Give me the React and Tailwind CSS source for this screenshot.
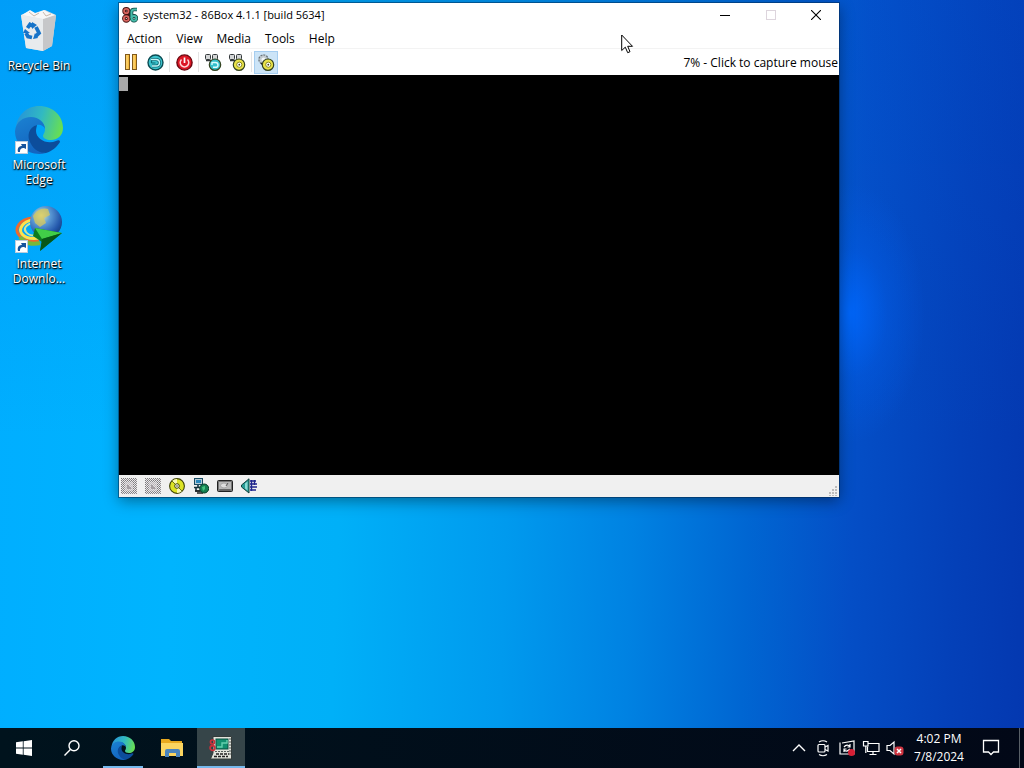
import clsx from "clsx";

function BinIcon() {
  return (
    <svg width="48" height="48" viewBox="0 0 48 48">
      <path d="M6 8 L15 4 L22 7 L30 3 L41 8 L37 39 L28 44 L11 41 Z" fill="#d9dde1" />
      <path d="M6 8 L28 12 L28 44 L11 41 Z" fill="#e8ebed" />
      <path d="M28 12 L41 8 L37 39 L28 44 Z" fill="#c6c7c9" />
      <path d="M7 8 L15 3 L20 6 L29 3 L34 6 L40 8 L28 12 Z" fill="#f7f7f7" />
      <path d="M14 5 L19 9 L24 6 M28 5 L31 9 L36 7" stroke="#c9b8ac" strokeWidth="1" fill="none" />
      <g fill="none" stroke="#1673c9" strokeWidth="3.8">
        <path d="M12.5 21 L15 17.5 L18 19" />
        <path d="M21 20 L24 26 L21 29" />
        <path d="M17 30.5 L13 29.5 L11 26" />
      </g>
      <path d="M17 15 L22 18 L17 22 Z M20 26 L18 32 L23 31 Z M8 26 L10 22 L15 26 Z" fill="#1673c9" />
    </svg>
  );
}

function EdgeIcon({ size = 48, id }) {
  return (
    <svg width={size} height={size} viewBox="0 0 48 48">
      <defs>
        <linearGradient id={`${id}-top`} x1="0" y1="0.4" x2="1" y2="0.6">
          <stop offset="0" stopColor="#2794d8" />
          <stop offset="0.5" stopColor="#31b9c2" />
          <stop offset="1" stopColor="#6ae04e" />
        </linearGradient>
        <linearGradient id={`${id}-mid`} x1="0" y1="0" x2="0.4" y2="1">
          <stop offset="0" stopColor="#1b82d2" />
          <stop offset="1" stopColor="#1365c0" />
        </linearGradient>
      </defs>
      <path d="M1 22 C2 9 12 0 24 0 C38 0 48 10 48 22 C48 30 42 34 36 34 C31 34 28 32 28 30 C28 28 30 27 30 23 C30 17 24 12 16 12 C9 12 4 16 1 22 Z" fill={`url(#${id}-top)`} />
      <path d="M0 25 C1 16 8 11 16 11 C24 11 30 17 30 23 C29 20 25 18 22 19 C15 22 13 29 17 36 C20 42 26 46 31 47 C16 51 0 41 0 25 Z" fill={`url(#${id}-mid)`} />
      <path d="M22 19 C14 21 11 30 16 38 C19 44 25 47 31 47 C37 45 42 41 45 36 C45 34 43 34 41 35 C32 39 21 33 21 25 C21 22 22 20 22 19 Z" fill="#0c4d9b" />
    </svg>
  );
}

function DownloaderIcon() {
  return (
    <svg width="48" height="48" viewBox="0 0 48 48">
      <defs>
        <radialGradient id="globe" cx="0.35" cy="0.3" r="0.8">
          <stop offset="0" stopColor="#e6efb0" />
          <stop offset="0.35" stopColor="#5c9bd6" />
          <stop offset="0.75" stopColor="#2458ac" />
          <stop offset="1" stopColor="#123a78" />
        </radialGradient>
      </defs>
      <path d="M18 13 C4 14 -1 24 4 30 C8 36 16 37 24 36" fill="none" stroke="#ee6a2c" strokeWidth="3" />
      <path d="M18 15 C8 16 3 24 7 29 C11 34 18 34 25 33" fill="none" stroke="#ffe24a" strokeWidth="3" />
      <path d="M5 32 C9 38 17 40 25 38" fill="none" stroke="#79b83a" strokeWidth="4" />
      <path d="M18 18 C11 19 8 24 11 27 C14 31 20 31 25 30" fill="none" stroke="#c9e7a0" strokeWidth="2" />
      <circle cx="31" cy="17" r="16" fill="url(#globe)" />
      <path d="M18 11 C21 5 28 2 33 4 L35 10 L29 13 L31 18 L25 22 L20 18 Z" fill="#d9c85a" opacity="0.75" />
      <path d="M20 23 L47 28 L25 46 L27 37 L18 31 Z" fill="#0c7a20" />
      <path d="M20 23 L47 28 L27 34 Z" fill="#41ce48" />
      <path d="M27 34 L47 28 L25 46 Z" fill="#075718" />
    </svg>
  );
}

function ShortcutArrow() {
  return (
    <svg className="absolute bottom-0 left-0" width="13" height="13" viewBox="0 0 13 13">
      <rect x="0.5" y="0.5" width="12" height="12" fill="#fff" stroke="#bcd" />
      <path d="M3 11 C2 7 4 5 7 5 L6 3 L11 3 L11 8 L9 7 C6 7 5 8 5 11 Z" fill="#17549c" />
    </svg>
  );
}

function BoxLogo() {
  return (
    <svg width="16" height="16" viewBox="0 0 16 16" fill="none">
      <g stroke="#42100f" strokeWidth="3.6">
        <circle cx="4.3" cy="4" r="2.2" />
        <circle cx="4.3" cy="11.5" r="2.4" />
        <path d="M4 7.7 H8" />
      </g>
      <g stroke="#d8655f" strokeWidth="1.8">
        <circle cx="4.3" cy="4" r="2.2" />
        <circle cx="4.3" cy="11.5" r="2.4" />
      </g>
      <g stroke="#0d4540" strokeWidth="3.6">
        <path d="M15 2.5 H12 Q9.5 2.5 9.5 5 V11" />
        <circle cx="12" cy="11.3" r="2.4" />
      </g>
      <g stroke="#45bba9" strokeWidth="2">
        <path d="M15 2.5 H12 Q9.5 2.5 9.5 5 V11" />
        <circle cx="12" cy="11.3" r="2.4" />
      </g>
    </svg>
  );
}

function PauseIcon() {
  return (
    <svg width="16" height="16" viewBox="0 0 16 16" fill="#f5b93c" stroke="#80591a">
      <rect x="2.5" y="0.5" width="4" height="15" />
      <rect x="9.5" y="0.5" width="4" height="15" />
      <path d="M4 1 V15 M11 1 V15" stroke="#ffe08a" />
    </svg>
  );
}

function ResetIcon() {
  return (
    <svg width="17" height="17" viewBox="0 0 17 17" fill="none">
      <circle cx="8.5" cy="8.5" r="7.5" fill="#3cc3cd" stroke="#0b4b52" strokeWidth="1.4" />
      <path d="M4 5.5 H9 Q12.5 5.5 12.5 8.7 T9 12 H5" stroke="#0b6a74" strokeWidth="3" />
      <path d="M4 5.5 H9 Q12.5 5.5 12.5 8.7 T9 12 H5" stroke="#c4f6f8" strokeWidth="1.4" />
      <path d="M4.5 9 H8.5 M4.5 9 V6.5" stroke="#0b6a74" strokeWidth="1.2" />
    </svg>
  );
}

function PowerIcon() {
  return (
    <svg width="17" height="17" viewBox="0 0 17 17" fill="none">
      <circle cx="8.5" cy="8.5" r="7.6" fill="#dc1624" stroke="#6c0710" strokeWidth="1.4" />
      <path d="M5.5 5.5 A4.3 4.3 0 1 0 11.5 5.5" stroke="#ffd5d5" strokeWidth="1.5" />
      <path d="M8.5 3.5 V9" stroke="#fff" strokeWidth="1.7" />
    </svg>
  );
}

// Small key caps over a round badge, shared by the Ctrl+Alt buttons and Settings
function BadgeIcon({ color, back = "keys", mark = "ring" }) {
  return (
    <svg width="18" height="17" viewBox="0 0 18 17" fill="none">
      {back === "keys" ? (
        <g fill="#d4d6d7" stroke="#33383b">
          <rect x="1.5" y="0.5" width="5" height="5" rx="1" />
          <rect x="8.5" y="0.5" width="5" height="5" rx="1" />
          <path d="M2 6.5 H7" strokeWidth="1.5" />
        </g>
      ) : (
        <>
          <circle cx="6.5" cy="5.5" r="4.6" fill="#c3cbd0" stroke="#6b757b" strokeWidth="1.3" strokeDasharray="2 1" />
          <circle cx="6.5" cy="5.5" r="2" fill="#f2f6f8" />
          <path d="M4 9 L7 12" stroke="#222" strokeWidth="1.5" />
        </>
      )}
      <circle cx="11" cy="10.7" r="5.7" fill={color} stroke="#33421f" strokeWidth="1.2" />
      {mark === "ring" ? (
        <>
          <circle cx="11.3" cy="10.7" r="2.6" fill="#fff" stroke="#8c8a17" />
          <circle cx="11.3" cy="10.7" r="0.9" fill="#3d3d10" />
        </>
      ) : (
        <path d="M8 8 V11 M8 8.5 H11.5 Q14 8.5 14 11 T11 13.3 H9" stroke="#dcfdff" strokeWidth="1.4" />
      )}
    </svg>
  );
}

function FloppyIcon() {
  return (
    <svg width="16" height="16" viewBox="0 0 16 16" shapeRendering="crispEdges">
      <defs>
        <pattern id="dither" width="2" height="2" patternUnits="userSpaceOnUse">
          <rect width="1" height="1" fill="#7c7c7c" />
          <rect x="1" y="1" width="1" height="1" fill="#8f8f8f" />
        </pattern>
      </defs>
      <rect width="16" height="16" fill="#ece8ec" />
      <rect width="16" height="16" fill="url(#dither)" />
      <rect x="4" y="4" width="8" height="9" fill="#dfdade" opacity="0.6" />
      <path d="M6 7 H8 V9 H10 V11 H6 Z" fill="#a39da1" />
    </svg>
  );
}

function DiscIcon() {
  return (
    <svg width="16" height="16" viewBox="0 0 16 16">
      <circle cx="8" cy="8" r="7.4" fill="#dce326" stroke="#3c4106" strokeWidth="1.1" />
      <path d="M8 8 L3 3 A7 7 0 0 1 8 1 Z M8 8 L13 13 A7 7 0 0 1 8 15 Z" fill="#fafcb2" />
      <path d="M3 3 L13 13" stroke="#6d7312" />
      <circle cx="8" cy="8" r="2.3" fill="#fff" stroke="#3c4106" />
      <circle cx="8" cy="8" r="0.8" fill="#3c4106" />
    </svg>
  );
}

function NetworkIcon() {
  return (
    <svg width="16" height="16" viewBox="0 0 16 16">
      <rect x="1.5" y="0.5" width="8" height="6" fill="#b6cbd5" stroke="#184b62" />
      <rect x="3" y="2" width="5" height="3" fill="#2a87bc" />
      <path d="M5 7 V9 M1 9.5 H10 M3 10 V13 H7" stroke="#14313c" strokeWidth="1.6" fill="none" />
      <path d="M2 13 H9 M4 15 H10" stroke="#222" strokeWidth="1.4" />
      <circle cx="11.2" cy="10.5" r="4.5" fill="#138052" stroke="#083c26" />
      <path d="M9 9 L12 8 L12 11 L10 13 Z" fill="#44c180" />
    </svg>
  );
}

function DiskIcon() {
  return (
    <svg width="16" height="16" viewBox="0 0 16 16">
      <rect x="0.5" y="2.5" width="15" height="11" rx="1" fill="#777" stroke="#222" />
      <rect x="2" y="4" width="12" height="7" fill="#b8b8b8" />
      <ellipse cx="7" cy="7.5" rx="3.5" ry="2.5" fill="#dedede" stroke="#a5a5a5" />
      <path d="M11 5 L9 8 M3 12 H13" stroke="#555" />
    </svg>
  );
}

function SoundIcon() {
  return (
    <svg width="16" height="16" viewBox="0 0 16 16">
      <path d="M0.5 7 L3 5 L8 0.8 V15 L3 11 L0.5 9 Z" fill="#279b94" stroke="#11403e" />
      <path d="M4 5.5 L6.5 3.5 V12.5 L4 10.5 Z" fill="#8adbd3" />
      <path d="M10.5 2 V13 M9 3 H15 M9 6 H16 M9 9 H16 M9 12 H15 M13.5 2 V7" stroke="#1f258d" strokeWidth="1.4" />
    </svg>
  );
}

function FolderIcon() {
  return (
    <svg width="24" height="24" viewBox="0 0 24 24">
      <path d="M1 3 H9 L11 5 H22 V20 H1 Z" fill="#e8a91f" />
      <path d="M1 7 H23 V20 H1 Z" fill="#fbd560" />
      <path d="M5 21 V15 Q5 13 7 13 H18 Q20 13 20 15 V21 H16 V17 H9 V21 Z" fill="#4a84bd" />
    </svg>
  );
}

function MachineIcon() {
  return (
    <svg width="24" height="24" viewBox="0 0 24 24">
      <path d="M4 0.5 H22.5 V23 H1.5 L4 17 Z" fill="#e2e3dc" stroke="#343c3b" />
      <rect x="7" y="3" width="12" height="10" fill="#129070" stroke="#0d4f41" />
      <path d="M8 11 H13 V7 H18 V4" fill="none" stroke="#65d0ae" strokeWidth="1.4" />
      <path d="M21 2 V20 M6 15.5 H20" stroke="#555e5b" strokeDasharray="2 1" />
      <path d="M7 18 H20 M5 20.5 H19" stroke="#222" strokeDasharray="3 1" strokeWidth="1.5" />
      <circle cx="3.5" cy="6" r="2" fill="none" stroke="#c9313b" strokeWidth="1.7" />
      <circle cx="3.5" cy="12" r="2.4" fill="none" stroke="#c9313b" strokeWidth="1.7" />
    </svg>
  );
}

function DesktopIcon({ label, shortcut, children }) {
  return (
    <button className="flex h-[99px] w-[76px] flex-col items-center gap-[3px]">
      <span className="relative">
        {children}
        {shortcut && <ShortcutArrow />}
      </span>
      <span className="text-[12px] leading-[15px] text-white [text-shadow:0_1px_2px_#000,1px_1px_1px_#000]">
        {label.map((line) => (
          <span key={line} className="block whitespace-nowrap">{line}</span>
        ))}
      </span>
    </button>
  );
}

function ToolButton({ label, active, children }) {
  return (
    <button
      aria-label={label}
      className={clsx(
        "flex h-[23px] w-6 items-center justify-center border",
        active ? "border-[#a5cdf0] bg-[#cce4f7]" : "border-transparent"
      )}
    >
      {children}
    </button>
  );
}

function Separator() {
  return <div className="mx-[2px] h-5 w-px bg-[#e4e4e4]" />;
}

function BoxWindow() {
  return (
    <section className="absolute top-[3px] left-[119px] flex w-[720px] flex-col bg-white text-[12px] text-black shadow-[0_0_0_1px_rgba(0,40,80,0.5),0_4px_14px_rgba(0,0,0,0.4)]">
      <header className="flex h-6 items-center pl-[3px]">
        <BoxLogo />
        <h1 className="flex-1 pl-[5px] text-[11px]">system32 - 86Box 4.1.1 [build 5634]</h1>
        <button aria-label="Minimize" className="flex h-6 w-[46px] items-center justify-center">
          <svg width="10" height="10" viewBox="0 0 10 10"><path d="M0 5.5 H10" stroke="#000" /></svg>
        </button>
        <button aria-label="Maximize" disabled className="flex h-6 w-[45px] items-center justify-center">
          <svg width="10" height="10" viewBox="0 0 10 10"><rect x="0.5" y="0.5" width="9" height="9" fill="none" stroke="#ddd5dd" /></svg>
        </button>
        <button aria-label="Close" className="flex h-6 w-[46px] items-center justify-center">
          <svg width="10" height="10" viewBox="0 0 10 10"><path d="M0 0 L10 10 M10 0 L0 10" stroke="#000" strokeWidth="1.1" /></svg>
        </button>
      </header>

      <nav className="flex h-[22px] items-end border-b border-[#f3f3f3]">
        {["Action", "View", "Media", "Tools", "Help"].map((item) => (
          <button key={item} className="px-[7px] first:pl-2">{item}</button>
        ))}
      </nav>

      <div className="flex h-[26px] items-center">
        <ToolButton label="Pause"><PauseIcon /></ToolButton>
        <ToolButton label="Hard reset"><ResetIcon /></ToolButton>
        <Separator />
        <ToolButton label="ACPI shutdown"><PowerIcon /></ToolButton>
        <Separator />
        <ToolButton label="Ctrl+Alt+Del"><BadgeIcon color="#35bfca" mark="arrow" /></ToolButton>
        <ToolButton label="Ctrl+Alt+Esc"><BadgeIcon color="#eae34a" /></ToolButton>
        <Separator />
        <ToolButton label="Settings" active><BadgeIcon color="#eae34a" back="gear" /></ToolButton>
        <p className="flex-1 pt-[2px] pr-px text-right">7% - Click to capture mouse</p>
      </div>

      <div className="h-[400px] bg-black pt-[2px]">
        <div className="h-[14px] w-[9px] bg-[#a8a8a8]" />
      </div>

      <footer className="flex h-[22px] items-center gap-2 bg-[#f0f0f0] pl-[2px]">
        <FloppyIcon />
        <FloppyIcon />
        <DiscIcon />
        <NetworkIcon />
        <DiskIcon />
        <SoundIcon />
        <svg className="ml-auto self-end" width="12" height="12" viewBox="0 0 12 12" fill="#bcbcbc">
          <path d="M8 1h2v2h-2z M5 4h2v2h-2z M8 4h2v2h-2z M2 7h2v2h-2z M5 7h2v2h-2z M8 7h2v2h-2z M2 10h2v1h-2z M5 10h2v1h-2z M8 10h2v1h-2z" />
        </svg>
      </footer>
    </section>
  );
}

function TaskButton({ label, running, active, children }) {
  return (
    <button
      aria-label={label}
      className={clsx("flex h-10 w-12 flex-col items-center", active && "bg-[#364549]")}
    >
      <span className="flex h-10 items-center">{children}</span>
      {running && <span className={clsx("-mt-[2px] h-[2px] bg-[#76b9ed]", active ? "w-12" : "w-10")} />}
    </button>
  );
}

function TrayButton({ label, children }) {
  return (
    <button aria-label={label} className="flex h-10 w-6 items-center justify-center">
      <svg width="18" height="18" viewBox="0 0 18 18" fill="none" stroke="#fff" strokeWidth="1.2">
        {children}
      </svg>
    </button>
  );
}

function Taskbar() {
  return (
    <footer className="flex h-10 items-center bg-linear-to-r from-[#00131d] to-[#020817] text-white">
      <div className="flex">
        <TaskButton label="Start">
          <svg width="16" height="16" viewBox="0 0 16 16" fill="#fff">
            <path d="M0 2.3 L6.8 1.3 V7.6 H0 Z M7.6 1.2 L16 0 V7.6 H7.6 Z M0 8.4 H6.8 V14.7 L0 13.7 Z M7.6 8.4 H16 V16 L7.6 14.8 Z" />
          </svg>
        </TaskButton>
        <TaskButton label="Search">
          <svg width="16" height="16" viewBox="0 0 16 16" fill="none" stroke="#fff" strokeWidth="1.4">
            <circle cx="10" cy="5.8" r="5" />
            <path d="M6.4 9.4 L0.5 15.5" />
          </svg>
        </TaskButton>
        <div className="flex gap-px pl-[3px]">
          <TaskButton label="Microsoft Edge" running><EdgeIcon size={24} id="edge-task" /></TaskButton>
          <TaskButton label="File Explorer"><FolderIcon /></TaskButton>
          <TaskButton label="86Box" running active><MachineIcon /></TaskButton>
        </div>
      </div>

      <div className="ml-auto flex items-center">
        <TrayButton label="Show hidden icons"><path d="M3 12 L9 6 L15 12" strokeWidth="1.4" /></TrayButton>
        <TrayButton label="Meet Now">
          <rect x="4" y="5.5" width="7" height="7.5" rx="1" />
          <path d="M11 8 L14 6.5 V12 L11 10.5 M5 3 Q9 0.5 13 3 M5 15.5 Q9 18 13 15.5" />
        </TrayButton>
        <TrayButton label="Updates">
          <path d="M2 5 V15 H16 V2 L4 4 M2 3.5 V6" />
          <path d="M6 8 Q9 4.5 12 7.5 M12 5 V8 H9.5 M12 10 Q9 13.5 6 11 M6 13 V10 H8.5" />
          <circle cx="13.5" cy="13.5" r="3.5" fill="#d51f35" stroke="none" />
        </TrayButton>
        <TrayButton label="Network">
          <path d="M6 4.5 H17 V12.5 H5.5 V7.5 M11 12.5 V15.5 M7.5 15.5 H14.5" />
          <path d="M1.5 2.5 H6 V7 H1.5 Z M3.8 7 V14" />
        </TrayButton>
        <TrayButton label="Volume muted">
          <path d="M1 6.5 H4 L8 3 V15 L4 11.5 H1 Z" />
          <rect x="8.5" y="7.5" width="9" height="9" rx="3" fill="#ce3440" stroke="none" />
          <path d="M11 10 L15 14 M15 10 L11 14" strokeWidth="1.5" />
        </TrayButton>
        <button className="ml-1 w-14 text-center text-[12px] leading-[18px]">
          <span className="block">4:02 PM</span>
          <span className="block">7/8/2024</span>
        </button>
        <button aria-label="Notifications" className="flex h-10 w-12 items-center justify-center">
          <svg width="18" height="18" viewBox="0 0 18 18" fill="none" stroke="#fff" strokeWidth="1.3">
            <path d="M1.5 1.5 H16.5 V13 H11.5 L9 15.5 L6.5 13 H1.5 Z" />
          </svg>
        </button>
        <button aria-label="Show desktop" className="ml-1 h-10 w-[5px] border-l border-[#596067]" />
      </div>
    </footer>
  );
}

export default function App() {
  return (
    <div className="flex min-h-screen flex-col font-['Open_Sans','Noto_Sans',sans-serif]">
      <main className="relative flex-1 overflow-hidden bg-[radial-gradient(ellipse_75px_130px_at_83%_43%,rgba(0,104,255,0.85)_0%,rgba(0,96,240,0.35)_50%,transparent_100%),linear-gradient(180deg,rgba(0,90,220,0.2)_0%,transparent_60%),linear-gradient(92deg,#00aeff_0%,#00b4fe_18%,#00b0f8_34%,#009aee_50%,#0082e2_62%,#0066d2_73%,#044ec6_83%,#0440b8_93%,#0438b0_100%)]">
        <div className="flex w-[78px] flex-col items-center pt-[7px]">
          <DesktopIcon label={["Recycle Bin"]}><BinIcon /></DesktopIcon>
          <DesktopIcon label={["Microsoft", "Edge"]} shortcut><EdgeIcon id="edge-desk" /></DesktopIcon>
          <DesktopIcon label={["Internet", "Downlo..."]} shortcut><DownloaderIcon /></DesktopIcon>
        </div>

        <BoxWindow />

        <svg className="absolute top-[34px] left-[621px]" width="13" height="20" viewBox="0 0 13 20">
          <path d="M0.7 1 V16.5 L4.3 13.2 L6.7 18.7 L9 17.7 L6.7 12.3 H11.5 Z" fill="#fff" stroke="#000" />
        </svg>
      </main>

      <Taskbar />
    </div>
  );
}
